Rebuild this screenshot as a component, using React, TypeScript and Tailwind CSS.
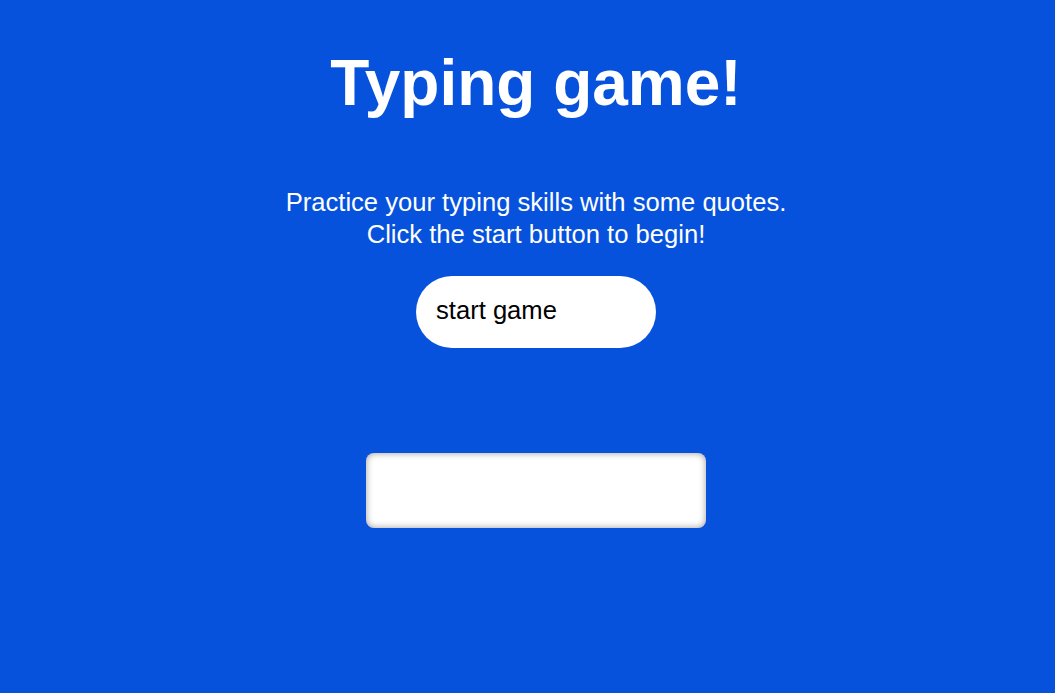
const App = () => {
  return (
    <main className="min-h-screen w-full bg-[#0652dd] pl-[17px] font-['Liberation_Sans',Arial,sans-serif] text-white">
      <div className="flex flex-col items-center">
        <h1 className="mt-[51px] text-[64px] font-bold leading-[64px]">Typing game!</h1>

        <p className="mt-[71px] text-center text-[25.6px] leading-[32px]">
          Practice your typing skills with some quotes.
          <br />
          Click the start button to begin!
        </p>

        <button
          type="button"
          className="mt-[26px] h-[72px] w-[240px] rounded-full bg-white pb-[4px] pl-[20px] text-left text-[25.6px] text-black"
        >
          start game
        </button>

        <input
          type="text"
          aria-label="type here"
          className="mt-[105px] h-[75px] w-[340px] rounded-[8px] bg-white px-3 text-[24px] text-black shadow-[inset_0_0_7px_rgba(0,0,0,0.4)] outline-none"
        />
      </div>
    </main>
  );
};

export default App;
